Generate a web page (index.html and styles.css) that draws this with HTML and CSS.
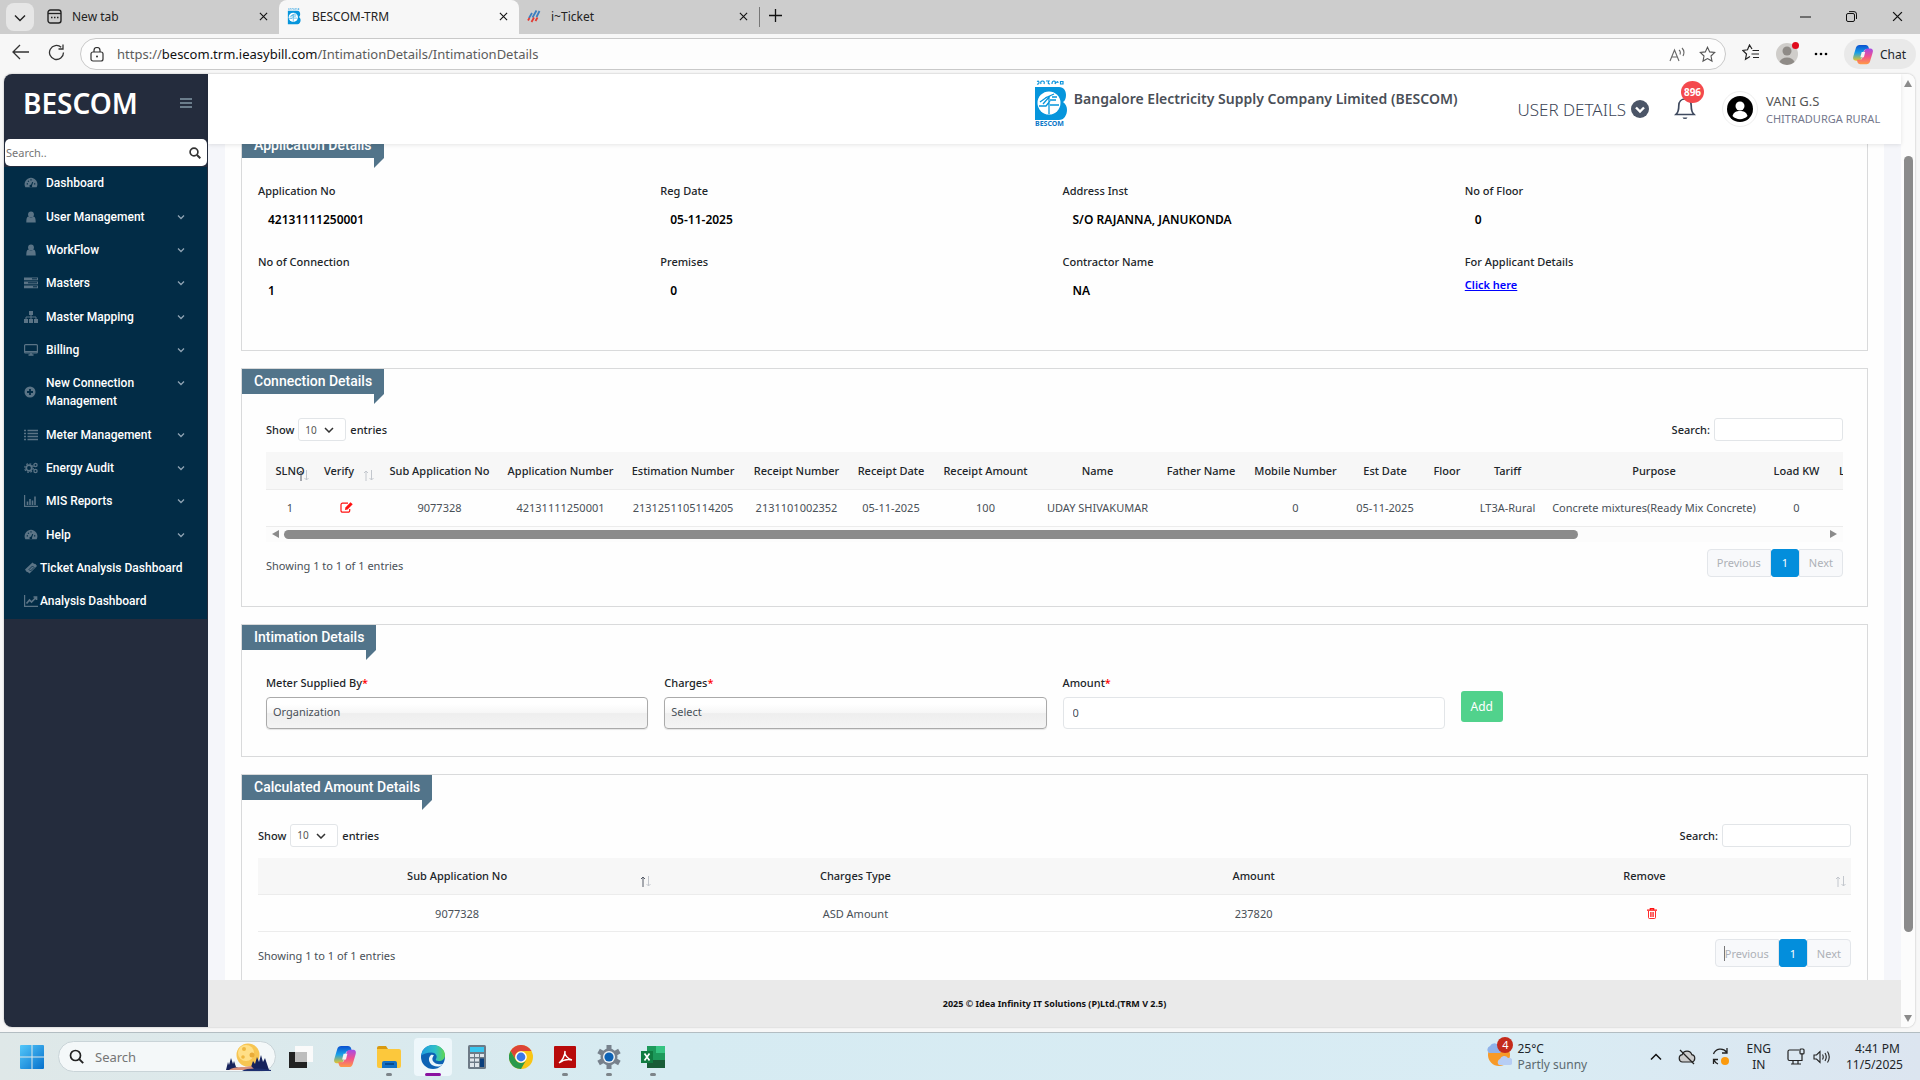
FILE: index.html
```html
<!DOCTYPE html>
<html lang="en">
<head>
  <meta charset="UTF-8" />
  <meta name="viewport" content="width=device-width, initial-scale=1.0"/>
  <title>BESCOM-TRM</title>
  <link rel="stylesheet" href="styles.css">
</head>
<body>
  <!-- shared icons -->
  <svg class="defs" aria-hidden="true">
    <linearGradient id="gBlue" x1="0" y1="0" x2="0" y2="1"><stop offset="0" stop-color="#0a4fd0"/><stop offset=".5" stop-color="#18a0e8"/><stop offset="1" stop-color="#e8c52a"/></linearGradient>
    <linearGradient id="gPink" x1="0" y1="0" x2="0" y2="1"><stop offset="0" stop-color="#a34be8"/><stop offset=".5" stop-color="#f0508e"/><stop offset="1" stop-color="#ff9a45"/></linearGradient>
    <linearGradient id="gWin" x1="0" y1="0" x2="1" y2="1"><stop offset="0" stop-color="#54c8fa"/><stop offset="1" stop-color="#0670cc"/></linearGradient>
    <linearGradient id="gEdge" x1="0" y1="0" x2="1" y2="0"><stop offset="0" stop-color="#1f9de0"/><stop offset=".6" stop-color="#2fc0c8"/><stop offset="1" stop-color="#5fd84f"/></linearGradient>
    <symbol id="copilot" viewBox="0 0 24 24">
      <path d="M8 1h7c2 0 3 1 3.500 3l.5 2h-3c-2 0-3 1-3.500 3l-2 7c-.6 2-2 3-4 3H4c-3 0-4-2-3-5l3-10c.7-2 2-3 4-3z" fill="url(#gBlue)"/>
      <path d="M16 23H9c-2 0-3-1-3.500-3L5 18h3c2 0 3-1 3.500-3l2-7c.6-2 2-3 4-3H20c3 0 4 2 3 5l-3 10c-.7 2-2 3-4 3z" fill="url(#gPink)"/>
      <path d="M10.500 9h4l-1.500 6H9z" fill="#f3f3f3"/>
    </symbol>
    <symbol id="bescom" viewBox="0 0 34 46">
      <path d="M2 1.500q2-1 2 1t-2 1.500M6 4q-1-3 1.500-3T9 4M11 1h3q-2 3 1 3M17 4q0-3 2-3t1 3q3-4 3-1M25.500 1.500h2.500v2.500h-2.500z" fill="none" stroke="#0b94dd" stroke-width="1.200"/>
      <path d="M0 7h24c5 0 7 4 7 8 0 3-1 6-3 7 3 2 4 5 4 8 0 5-3 10-8 10H0z" fill="#0695dc"/>
      <circle cx="14" cy="23" r="11.500" fill="#fff"/>
      <path d="M14 34V17M10 18l9-4M8 24l7-8M15 20h6M5 22l7-5M4 26h7l4-5M22 17h-5M15 25h9" fill="none" stroke="#0695dc" stroke-width="1.300"/>
    </symbol>
    <symbol id="gauge" viewBox="0 0 16 14">
      <path d="M8 1a7.500 7.500 0 0 0-6.600 11h13.200A7.500 7.500 0 0 0 8 1z" fill="currentColor"/>
      <path d="M8 11l2-5M3 8h1.500M11.500 8H13M4.500 4.500l1 1M8 2.500V4" stroke="#022c46" stroke-width="1.300"/>
      <circle cx="7.800" cy="10.500" r="1.600" fill="#022c46"/>
    </symbol>
    <symbol id="user" viewBox="0 0 14 14"><circle cx="7" cy="4" r="3.400" fill="currentColor"/><path d="M4 6.500C2 7 1.500 9 1.500 13.500h11C12.500 9 12 7 10 6.500 8 8 6 8 4 6.500z" fill="currentColor"/></symbol>
    <symbol id="caret" viewBox="0 0 8 6"><path d="M1 1.500l3 3 3-3" fill="none" stroke="#8fa3b3" stroke-width="1.300"/></symbol>
    <symbol id="x" viewBox="0 0 10 10"><path d="M1 1l8 8M9 1L1 9" stroke="#111" stroke-width="1.200"/></symbol>
  </svg>

  <!-- browser tabs -->
  <div class="tabstrip">
    <button class="tab-menu" aria-label="Tab actions"><svg width="12" height="8" viewBox="0 0 12 8"><path d="M1 1.500l5 5 5-5" fill="none" stroke="#222" stroke-width="1.400"/></svg></button>
    <div class="tab first">
      <svg width="15" height="15" viewBox="0 0 15 15"><rect x="1" y="1" width="13" height="13" rx="2.500" fill="none" stroke="#222" stroke-width="1.400"/><path d="M1 4.500h13" stroke="#222" stroke-width="1.300"/><path d="M4 8.500h1.500M7 8.500h1.500M10 8.500h1.500" stroke="#222" stroke-width="1.600"/></svg>
      <span>New tab</span>
      <button aria-label="Close tab"><svg width="9" height="9"><use href="#x"/></svg></button>
    </div>
    <div class="tab active">
      <svg width="15" height="17" viewBox="0 0 34 42"><use href="#bescom" width="34" height="46"/></svg>
      <span>BESCOM-TRM</span>
      <button aria-label="Close tab"><svg width="9" height="9"><use href="#x"/></svg></button>
    </div>
    <div class="tab">
      <svg width="14" height="14" viewBox="0 0 14 14"><path d="M2 9l3-5M5.500 8.500L9.500 1.500M9.500 8l3-6" stroke="#3c7fc0" stroke-width="1.800"/><path d="M1 11.500l1.500-2.500M4.500 13l2.500-4.500M8.500 12l2-3.500" stroke="#e23b34" stroke-width="1.800"/></svg>
      <span>i~Ticket</span>
      <button aria-label="Close tab"><svg width="9" height="9"><use href="#x"/></svg></button>
    </div>
    <button class="new-tab" aria-label="New tab"><svg width="15" height="15" viewBox="0 0 15 15"><path d="M7.500 1v13M1 7.500h13" stroke="#111" stroke-width="1.300"/></svg></button>
    <div class="window-buttons">
      <button aria-label="Minimize"><svg width="11" height="11"><path d="M0 6h11" stroke="#111"/></svg></button>
      <button aria-label="Restore"><svg width="11" height="11" viewBox="0 0 11 11"><rect x=".5" y="2.500" width="8" height="8" rx="1.500" fill="none" stroke="#111"/><path d="M3 .6h5a2.500 2.500 0 0 1 2.500 2.500V8" fill="none" stroke="#111"/></svg></button>
      <button aria-label="Close"><svg width="11" height="11"><use href="#x"/></svg></button>
    </div>
  </div>

  <!-- address bar -->
  <div class="toolbar">
    <button aria-label="Back"><svg width="17" height="16" viewBox="0 0 17 16"><path d="M8 1L1 8l7 7M1 8h16" fill="none" stroke="#333" stroke-width="1.300"/></svg></button>
    <button aria-label="Refresh"><svg width="17" height="17" viewBox="0 0 17 17"><path d="M15.500 8.500a7 7 0 1 1-2.300-5.200M15 .5v4.500h-4.500" fill="none" stroke="#333" stroke-width="1.300"/></svg></button>
    <div class="address">
      <svg width="14" height="15" viewBox="0 0 14 15"><rect x="1" y="5" width="12" height="9" rx="2" fill="none" stroke="#333" stroke-width="1.200"/><path d="M4 5V3.500a3 3 0 0 1 6 0V5" fill="none" stroke="#333" stroke-width="1.200"/><circle cx="7" cy="9.500" r="1" fill="#333"/></svg>
      <div class="url">https://<b>bescom.trm.ieasybill.com</b>/IntimationDetails/IntimationDetails</div>
      <svg width="17" height="15" viewBox="0 0 17 15"><path d="M1 14L5.500 3 10 14M2.500 10h6M10 3c1.500 1 1.500 3 1 4.500M13 1c2 2 2.500 5 1 8" fill="none" stroke="#666" stroke-width="1.100"/></svg>
      <svg width="17" height="17" viewBox="0 0 17 17"><path d="M8.500 1.200l2.200 4.700 5 .6-3.700 3.500 1 5.100-4.500-2.500L4 15.100l1-5.100L1.300 6.500l5-.6z" fill="none" stroke="#555" stroke-width="1.100"/></svg>
    </div>
    <button aria-label="Favorites"><svg width="18" height="17" viewBox="0 0 18 17"><path d="M10 5L7.500 1 5.500 5.800l-4.700.7L4.500 10l-1 5.200L8 12.500M10.500 6.500H17M9.500 10H17M11 13.500h6" fill="none" stroke="#222" stroke-width="1.200"/></svg></button>
    <div class="profile">
      <svg width="22" height="22" viewBox="0 0 22 22"><circle cx="11" cy="11" r="11" fill="#cfcdca"/><circle cx="11" cy="8" r="4.500" fill="#8f8b87"/><path d="M3.500 19a8 7 0 0 1 15 0 11 11 0 0 1-15 0z" fill="#8f8b87"/></svg>
    </div>
    <button class="more" aria-label="More"><svg width="14" height="4"><circle cx="2" cy="2" r="1.300"/><circle cx="7" cy="2" r="1.300"/><circle cx="12" cy="2" r="1.300"/></svg></button>
    <button class="chat"><svg width="22" height="21"><use href="#copilot"/></svg>Chat</button>
  </div>

  <!-- web page -->
  <div class="viewport">
    <aside class="sidebar">
      <div class="brand">
        <h1>BESCOM</h1>
        <button aria-label="Toggle menu"><svg width="12" height="10"><path d="M0 1h12M0 5h12M0 9h12" stroke="#8298a6" stroke-width="1.500"/></svg></button>
      </div>
      <div class="side-search">
        <input type="text" placeholder="Search.." aria-label="Search menu">
        <svg width="12" height="12" viewBox="0 0 12 12"><circle cx="5" cy="5" r="3.900" fill="none" stroke="#333" stroke-width="1.700"/><path d="M8 8l3.300 3.300" stroke="#333" stroke-width="2"/></svg>
      </div>
      <ul class="menu">
        <li><a href="#"><svg class="mi"><use href="#gauge"/></svg><span>Dashboard</span></a></li>
        <li><a href="#"><svg class="mi"><use href="#user"/></svg><span>User Management</span><svg class="caret"><use href="#caret"/></svg></a></li>
        <li><a href="#"><svg class="mi"><use href="#user"/></svg><span>WorkFlow</span><svg class="caret"><use href="#caret"/></svg></a></li>
        <li><a href="#"><svg class="mi" viewBox="0 0 14 12"><path d="M0 1.800h14M0 5.800h14M0 9.800h14" stroke="currentColor" stroke-width="2.800"/><path d="M8 1.800h5M4 5.800h9M9 9.800h4" stroke="#022c46"/></svg><span>Masters</span><svg class="caret"><use href="#caret"/></svg></a></li>
        <li><a href="#"><svg class="mi" viewBox="0 0 14 12"><path d="M5 0h4v4H5zM0 8h4v4H0zM5 8h4v4H5zM10 8h4v4h-4z" fill="currentColor"/><path d="M2 8V6h10v2M7 4v4" fill="none" stroke="currentColor"/></svg><span>Master Mapping</span><svg class="caret"><use href="#caret"/></svg></a></li>
        <li><a href="#"><svg class="mi" viewBox="0 0 14 12"><rect x=".6" y=".6" width="12.800" height="8.400" rx="1" fill="none" stroke="currentColor" stroke-width="1.200"/><path d="M1 7.800h12M4.500 11h5M7 9v2" stroke="currentColor" stroke-width="1.500"/></svg><span>Billing</span><svg class="caret"><use href="#caret"/></svg></a></li>
        <li class="two-line"><a href="#"><svg class="mi" viewBox="0 0 14 12"><circle cx="6" cy="6" r="5.500" fill="currentColor"/><path d="M6 3v6M3 6h6" stroke="#022c46" stroke-width="1.800"/></svg><span>New Connection Management</span><svg class="caret"><use href="#caret"/></svg></a></li>
        <li><a href="#"><svg class="mi" viewBox="0 0 14 12"><path d="M0 1.500h2M3.500 1.500H14M0 4.500h2M3.500 4.500H14M0 7.500h2M3.500 7.500H14M0 10.500h2M3.500 10.500H14" stroke="currentColor" stroke-width="1.600"/></svg><span>Meter Management</span><svg class="caret"><use href="#caret"/></svg></a></li>
        <li><a href="#"><svg class="mi" viewBox="0 0 14 12"><circle cx="5" cy="6" r="2.800" fill="none" stroke="currentColor" stroke-width="1.800"/><circle cx="5" cy="6" r="4.300" fill="none" stroke="currentColor" stroke-width="1.200" stroke-dasharray="1.800 1.580"/><circle cx="11.500" cy="3" r="1.600" fill="none" stroke="currentColor" stroke-width="1.300"/><circle cx="11.500" cy="9" r="1.600" fill="none" stroke="currentColor" stroke-width="1.300"/></svg><span>Energy Audit</span><svg class="caret"><use href="#caret"/></svg></a></li>
        <li><a href="#"><svg class="mi" viewBox="0 0 14 12"><path d="M.6 0v11.400H14" fill="none" stroke="currentColor" stroke-width="1.200"/><path d="M3.500 10V6.500M6 10V4M8.500 10V5.500M11 10V1.500" stroke="currentColor" stroke-width="1.600"/></svg><span>MIS Reports</span><svg class="caret"><use href="#caret"/></svg></a></li>
        <li><a href="#"><svg class="mi"><use href="#gauge"/></svg><span>Help</span><svg class="caret"><use href="#caret"/></svg></a></li>
        <li class="plain"><a href="#"><svg class="mi" viewBox="0 0 14 12"><path d="M1 7.500L8.500.5l1.500 1.300 1.500.2L13 4 5.500 11.500 4 10.200l-1.500-.4z" fill="currentColor"/><path d="M5 7.500l3.500-3.500 1.500 1.500L6.500 9z" fill="none" stroke="#022c46" stroke-width=".8"/></svg><span>Ticket Analysis Dashboard</span></a></li>
        <li class="plain"><a href="#"><svg class="mi" viewBox="0 0 14 12"><path d="M.6 0v11.400H14" fill="none" stroke="currentColor" stroke-width="1.200"/><path d="M2.500 8.500L5.500 5l2 2L12 2.500M9.500 2H12.500V5" fill="none" stroke="currentColor" stroke-width="1.700"/></svg><span>Analysis Dashboard</span></a></li>
      </ul>
    </aside>

    <div class="main">
      <header class="topbar">
        <svg class="logo" width="34" height="47" viewBox="0 0 34 47"><use href="#bescom" width="34" height="46"/><text x="0" y="46">BESCOM</text></svg>
        <div class="company">Bangalore Electricity Supply Company Limited (BESCOM)</div>
        <button class="user-details">USER DETAILS
          <svg width="18" height="18" viewBox="0 0 18 18"><circle cx="9" cy="9" r="9" fill="#4b5567"/><path d="M5 7.500l4 4 4-4" fill="none" stroke="#fff" stroke-width="2.400"/></svg>
        </button>
        <button class="bell" aria-label="Notifications">
          <svg width="22" height="24" viewBox="0 0 22 24"><path d="M2 18.500c2-1.800 2.800-4 2.800-9C4.800 5.500 7.500 3 11 3s6.200 2.500 6.200 6.500c0 5 .8 7.200 2.800 9zM11 1v2" fill="none" stroke="#3f4a5f" stroke-width="1.700"/><path d="M8.500 21.500a2.600 2.200 0 0 0 5 0z" fill="#3f4a5f"/></svg>
          <span class="badge">896</span>
        </button>
        <div class="avatar"><svg width="26" height="26" viewBox="0 0 26 26"><circle cx="13" cy="13" r="13"/><circle cx="13" cy="10" r="4.500" fill="#fff"/><path d="M5.500 20c1-4 4-5 7.500-5s6.500 1 7.500 5a10.500 10.500 0 0 1-15 0z" fill="#fff"/></svg></div>
        <div class="who">
          <div class="name">VANI G.S</div>
          <div class="office">CHITRADURGA RURAL</div>
        </div>
      </header>

      <div class="scroll-area">
        <div class="card">
          <section class="panel application">
            <h2 class="ribbon">Application Details</h2>
            <dl class="facts">
              <div><dt>Application No</dt><dd>42131111250001</dd></div>
              <div><dt>Reg Date</dt><dd>05-11-2025</dd></div>
              <div><dt>Address Inst</dt><dd>S/O RAJANNA, JANUKONDA</dd></div>
              <div><dt>No of Floor</dt><dd>0</dd></div>
              <div><dt>No of Connection</dt><dd>1</dd></div>
              <div><dt>Premises</dt><dd>0</dd></div>
              <div><dt>Contractor Name</dt><dd>NA</dd></div>
              <div><dt>For Applicant Details</dt><dd class="link"><a href="#">Click here</a></dd></div>
            </dl>
          </section>

          <section class="panel connection">
            <h2 class="ribbon">Connection Details</h2>
            <div class="table-tools">
              <label>Show <select><option>10</option></select> entries</label>
              <label>Search: <input type="text"></label>
            </div>
            <div class="table-scroll">
              <table class="wide">
                <colgroup><col class="c48"><col class="c64"><col class="c121"><col class="c121"><col class="c126"><col class="c103"><col class="c85"><col class="c103"><col class="c121"><col class="c85"><col class="c103"><col class="c76"><col class="c48"><col class="c73"><col class="c220"><col class="c64"><col></colgroup>
                <thead>
                  <tr>
                    <th class="sort asc">SLNO</th><th class="sort shift">Verify</th><th>Sub Application No</th><th>Application Number</th><th>Estimation Number</th><th>Receipt Number</th><th>Receipt Date</th><th>Receipt Amount</th><th>Name</th><th>Father Name</th><th>Mobile Number</th><th>Est Date</th><th>Floor</th><th>Tariff</th><th>Purpose</th><th>Load KW</th><th class="cut">Load HP</th>
                  </tr>
                </thead>
                <tbody>
                  <tr>
                    <td>1</td>
                    <td><svg class="edit" width="13" height="11" viewBox="0 0 13 11"><path d="M8 1.200H2.500A1.500 1.500 0 0 0 1 2.700v6a1.500 1.500 0 0 0 1.500 1.500H8.200a1.500 1.500 0 0 0 1.500-1.500V7" fill="none" stroke="#f11" stroke-width="1.200"/><path d="M5 8l.4-2.600L10.500.2l2.200 2L7.600 7.500z" fill="#f11"/></svg></td>
                    <td>9077328</td><td>42131111250001</td><td>2131251105114205</td><td>2131101002352</td><td>05-11-2025</td><td>100</td><td>UDAY SHIVAKUMAR</td><td></td><td>0</td><td>05-11-2025</td><td></td><td>LT3A-Rural</td><td>Concrete mixtures(Ready Mix Concrete)</td><td>0</td><td></td>
                  </tr>
                </tbody>
              </table>
            </div>
            <div class="hbar"><i class="arrow left"></i><div class="track"><div class="thumb"></div></div><i class="arrow right"></i></div>
            <div class="table-foot">
              <div>Showing 1 to 1 of 1 entries</div>
              <div class="pager"><button disabled>Previous</button><button class="current">1</button><button disabled>Next</button></div>
            </div>
          </section>

          <section class="panel intimation">
            <h2 class="ribbon">Intimation Details</h2>
            <form class="fields">
              <div class="field">
                <label for="supplied">Meter Supplied By<em>*</em></label>
                <select id="supplied"><option>Organization</option></select>
              </div>
              <div class="field">
                <label for="charges">Charges<em>*</em></label>
                <select id="charges"><option>Select</option></select>
              </div>
              <div class="field">
                <label for="amount">Amount<em>*</em></label>
                <input type="text" id="amount" value="0">
              </div>
              <button type="button" class="add">Add</button>
            </form>
          </section>

          <section class="panel calculated">
            <h2 class="ribbon">Calculated Amount Details</h2>
            <div class="table-tools">
              <label>Show <select><option>10</option></select> entries</label>
              <label>Search: <input type="text"></label>
            </div>
            <table>
              <thead>
                <tr><th class="sort asc">Sub Application No</th><th>Charges Type</th><th>Amount</th><th class="sort shift">Remove</th></tr>
              </thead>
              <tbody>
                <tr>
                  <td>9077328</td><td>ASD Amount</td><td>237820</td>
                  <td><svg width="10" height="11" viewBox="0 0 10 11"><path d="M0 2.200h10M3.300 2V.7h3.400V2" fill="none" stroke="#f11" stroke-width="1.200"/><path d="M1.500 3v6.500q0 1 1 1h5q1 0 1-1V3M3.700 4v5M5 4v5M6.300 4v5" fill="none" stroke="#f11" stroke-width=".9"/></svg></td>
                </tr>
              </tbody>
            </table>
            <div class="table-foot">
              <div>Showing 1 to 1 of 1 entries</div>
              <div class="pager"><button disabled class="has-cursor">Previous</button><button class="current">1</button><button disabled>Next</button></div>
            </div>
          </section>
        </div>
      </div>

      <footer class="page-footer">2025 © Idea Infinity IT Solutions (P)Ltd.(TRM V 2.5)</footer>
    </div>

    <div class="vbar"><i class="arrow up"></i><div class="track"><div class="thumb"></div></div><i class="arrow down"></i></div>
  </div>

  <!-- windows taskbar -->
  <div class="taskbar">
    <button class="start" aria-label="Start"><svg width="24" height="24" viewBox="0 0 24 24"><path d="M0 1q0-1 1-1h10.500v11.500H0zM12.500 0H23q1 0 1 1v10.500H12.500zM0 12.500h11.500V24H1q-1 0-1-1zM12.500 12.500H24V23q0 1-1 1H12.500z" fill="url(#gWin)"/></svg></button>
    <div class="task-search">
      <svg width="15" height="15" viewBox="0 0 15 15"><circle cx="6.500" cy="6.500" r="5" fill="none" stroke="#222" stroke-width="1.700"/><path d="M10.200 10.200l4 4" stroke="#222" stroke-width="1.900"/></svg>
      <input type="text" placeholder="Search" aria-label="Taskbar search">
      <svg width="45" height="28" viewBox="0 0 45 28"><circle cx="22" cy="12" r="11.500" fill="#f7c552"/><circle cx="20" cy="10" r="8" fill="#ffdf87"/><circle cx="18" cy="6" r="2" fill="#efb740"/><circle cx="26" cy="12" r="2.500" fill="#e9ab37"/><circle cx="17" cy="14" r="1.800" fill="#efb740"/><path d="M0 27l2-8 1 3 2-7 2 6 1-3 2 6 3 1 12-1 2-6 2 3 2-7 2 5 2-7 2 7 2-4 2 6 2 6z" fill="#16235c"/><path d="M3 27c5-4 13-2 22-4l4 4z" fill="#d98f7a"/><path d="M16 28c5-3 16-3 29-1v1z" fill="#1d2f70"/></svg>
    </div>
    <div class="apps">
      <button aria-label="Task view"><svg width="24" height="24" viewBox="0 0 24 24"><rect x="0" y="7" width="18" height="16" fill="#222"/><rect x="6" y="1" width="18" height="16" fill="#fafafa"/><path d="M6 7h12v10H6z" fill="#bdbdbd"/></svg></button>
      <button aria-label="Copilot"><svg width="24" height="23"><use href="#copilot"/></svg></button>
      <button class="open" aria-label="File Explorer"><svg width="26" height="24" viewBox="0 0 26 24"><path d="M1 3q0-2 2-2h7l2 3H1z" fill="#d99a10"/><path d="M1 4h22q2 0 2 2v15q0 2-2 2H3q-2 0-2-2z" fill="#fcc83c"/><path d="M6 23v-5q0-2 2-2h11q2 0 2 2v5z" fill="#1370c4"/><path d="M9 19h9" stroke="#084b90" stroke-width="2"/></svg></button>
      <button class="open focused" aria-label="Edge"><svg width="24" height="24" viewBox="0 0 24 24"><circle cx="12" cy="12" r="12" fill="#0d62b4"/><path d="M.3 10.500C1 4 6 0 12 0c7 0 12 5 12 10 0 4-3 6-6 6-2 0-4-.7-3-2 2-3-.5-6.500-4.500-6.500C6 7.500 2 9 .3 10.500z" fill="url(#gEdge)"/><path d="M10 10c-3 2-3 8 2 10.500 4 2 8 1 10.500-1.500-5 1-10-.5-11-4-.5-2 .5-3.500 1.500-4.500-1-.8-2-.9-3-.5z" fill="#e9f6fb"/></svg></button>
      <button aria-label="Calculator"><svg width="18" height="24" viewBox="0 0 18 24"><rect width="18" height="24" rx="1.500" fill="#6d7a86"/><path d="M2 2h14v5H2z" fill="#39c6ef"/><path d="M2 9h4v3H2zM7 9h4v3H7zM12 9h4v3h-4zM2 13.500h4v3H2zM7 13.500h4v3H7zM2 18h4v4H2zM7 18h4v4H7z" fill="#dfe5ea"/><path d="M12 13.500h4V22h-4z" fill="#0a3f7c"/></svg></button>
      <button aria-label="Chrome"><svg width="24" height="24" viewBox="0 0 24 24"><circle cx="12" cy="12" r="12" fill="#f9c515"/><path d="M1.600 6A12 12 0 0 1 22.400 6H12a6 6 0 0 0-5.200 9z" fill="#dc4437"/><path d="M1.600 6A12 12 0 0 0 12 24l5.200-9a6 6 0 0 1-10.400 0z" fill="#2a9a4c"/><circle cx="12" cy="12" r="5.800" fill="#fff"/><circle cx="12" cy="12" r="4.400" fill="#3b78e7"/></svg></button>
      <button class="open" aria-label="Acrobat"><svg width="22" height="22" viewBox="0 0 22 22"><rect width="22" height="22" rx="1" fill="#b80a0a"/><path d="M5 17c3-2 6-7 6-12M11 5c-1 4 3 8 7 9-4-1-9 0-13 3" fill="none" stroke="#fff" stroke-width="1.400"/></svg></button>
      <button class="open" aria-label="Settings"><svg width="24" height="24" viewBox="0 0 24 24"><circle cx="12" cy="12" r="8.500" fill="#77818c"/><path d="M12 0v24M1.600 6l20.800 12M1.600 18L22.400 6" stroke="#77818c" stroke-width="5"/><circle cx="12" cy="12" r="6" fill="#eef3f6"/><circle cx="12" cy="12" r="4.600" fill="#0d62b4"/></svg></button>
      <button class="open" aria-label="Excel"><svg width="24" height="22" viewBox="0 0 24 22"><path d="M6 0h18v22H6z" fill="#1d9a5b"/><path d="M15 0h9v7h-9z" fill="#35c481"/><path d="M6 14h18v8H6z" fill="#185c37"/><path d="M0 5h12v12H0z" fill="#107c41"/><path d="M3.500 7.500l5 7M8.500 7.500l-5 7" stroke="#fff" stroke-width="1.700"/></svg></button>
    </div>
    <div class="weather">
      <div class="weather-icon">
        <svg width="26" height="26" viewBox="0 0 26 26"><circle cx="13" cy="14" r="11" fill="#f79a28"/><path d="M3 12a4 4 0 0 1 1-7 5 5 0 0 1 9 0 4 4 0 0 1 1 7z" fill="#8fb2ea"/><path d="M13 24a3.500 3.500 0 0 1 1-6 4.500 4.500 0 0 1 8-1 3.500 3.500 0 0 1 2 7z" fill="#b6cdf4"/></svg>
        <span>4</span>
      </div>
      <div><div>25°C</div><div class="muted">Partly sunny</div></div>
    </div>
    <div class="tray">
      <svg width="12" height="8" viewBox="0 0 12 8"><path d="M1 6.500l5-5 5 5" fill="none" stroke="#111" stroke-width="1.500"/></svg>
      <svg width="18" height="16" viewBox="0 0 18 16"><path d="M4.500 13a3.700 3.700 0 0 1-.3-7.300 5 5 0 0 1 9.600 0A3.700 3.700 0 0 1 13.500 13z" fill="#ccc" stroke="#222" stroke-width="1.200"/><path d="M2 1l14 14" stroke="#222" stroke-width="1.300"/></svg>
      <svg width="18" height="18" viewBox="0 0 18 18"><path d="M1.500 6a7.500 7.500 0 0 1 13-2M15 0v5h-5M6 16a7 7 0 0 1-4-4M1.500 16v-4.500H6" fill="none" stroke="#222" stroke-width="1.300"/><circle cx="13" cy="13" r="4" fill="#fb9a0e"/></svg>
      <div class="lang">ENG<br>IN</div>
      <svg width="18" height="17" viewBox="0 0 18 17"><path d="M12 2H2.500Q1 2 1 3.500V11q0 1.500 1.500 1.500H15V8M4 16h10M6 12.500V16M11 12.500V16M15 8V5" fill="none" stroke="#222" stroke-width="1.200"/><rect x="13" y="1" width="4" height="5" rx="1" fill="none" stroke="#222" stroke-width="1.200"/></svg>
      <svg class="speaker" width="17" height="14" viewBox="0 0 17 14"><path d="M1 5h2.500L7 1.500v11L3.500 9H1zM9.500 4.500q1.500 2.500 0 5M12 3q2.500 4 0 8M14.500 1.500q3.500 5.500 0 11" fill="none" stroke="#222" stroke-width="1.100"/></svg>
      <div class="clock">4:41 PM<br>11/5/2025</div>
    </div>
  </div>
</body>
</html>
```
FILE: styles.css
```css
* {
  box-sizing: border-box;
}

body {
  margin: 0;
  height: 100vh;
  display: flex;
  flex-direction: column;
  overflow: hidden;
  background: #f7f7f7;
  font-family: "Noto Sans", "Open Sans", sans-serif;
  font-size: 12px;
  color: #212529;
}

button, input, select {
  font-family: inherit;
  font-size: inherit;
  color: inherit;
}

button {
  border: none;
  background: none;
  padding: 0;
  cursor: pointer;
}

button, svg {
  flex-shrink: 0;
}

.defs {
  position: absolute;
  width: 0;
  height: 0;
}

/* ---- browser tabs ---- */
.tabstrip {
  display: flex;
  align-items: center;
  height: 34px;
  flex-shrink: 0;
  background: #cdcdcd;
}

.tab-menu {
  width: 28px;
  height: 28px;
  margin: 0 5px 0 6px;
  border-radius: 8px;
  background: #e6e6e6;
}

.tab {
  display: flex;
  align-items: center;
  gap: 10px;
  width: 240px;
  height: 34px;
  padding: 0 11px 2px 8px;
  color: #222;
}

.tab span {
  flex: 1;
}

.tab.active {
  background: #f7f7f7;
  border-radius: 8px 8px 0 0;
}

.new-tab {
  height: 20px;
  padding: 0 8px;
  border-left: 1px solid #777;
}

.window-buttons {
  display: flex;
  margin-left: auto;
}

.window-buttons button {
  width: 46px;
  height: 34px;
}

/* ---- address bar ---- */
.toolbar {
  display: flex;
  align-items: center;
  gap: 16px;
  height: 40px;
  flex-shrink: 0;
  padding: 0 4px 0 12px;
}

.toolbar > button:nth-child(2) {
  margin: 0 3px;
}

.address {
  display: flex;
  align-items: center;
  gap: 13px;
  flex: 1;
  height: 32px;
  padding: 0 9px;
  margin-left: -4px;
  border: 1px solid #c9c9c9;
  border-radius: 16px;
  background: #fdfdfd;
}

.url {
  flex: 1;
  font-size: 13px;
  color: #5c5c5c;
}

.url b {
  font-weight: 400;
  color: #111;
}

.profile {
  position: relative;
  height: 22px;
}

.profile::after {
  content: "";
  position: absolute;
  top: -1px;
  right: -1px;
  width: 7px;
  height: 7px;
  border-radius: 50%;
  background: #e00b1c;
}

.more {
  display: flex;
}

.chat {
  display: flex;
  align-items: center;
  gap: 6px;
  height: 30px;
  padding: 0 10px 0 8px;
  border-radius: 15px;
  background: #e9e9e9;
}

/* ---- viewport ---- */
.viewport {
  flex: 1;
  min-height: 0;
  display: flex;
  margin: 0 5px 5px 4px;
  border-radius: 8px;
  overflow: hidden;
  background: #fff;
  box-shadow: 0 0 2px #aaa;
}

.sidebar {
  width: 204px;
  flex-shrink: 0;
  background: #242c3d;
}

.brand {
  display: flex;
  align-items: center;
  justify-content: space-between;
  height: 65px;
  padding: 0 16px 7px 19px;
}

.brand h1 {
  margin: 0;
  font-size: 28px;
  font-weight: 600;
  color: #fff;
}

.side-search {
  display: flex;
  align-items: center;
  height: 27px;
  margin: 0 1px;
  padding: 0 6px 0 1px;
  border-radius: 5px;
  background: #fff;
}

.side-search input {
  flex: 1;
  min-width: 0;
  padding: 0;
  border: none;
  outline: none;
  font-size: 11px;
}

.menu {
  list-style: none;
  margin: 1px 1px 0 0;
  padding: 0;
  background: #022c46;
  font-family: Roboto, sans-serif;
  font-weight: 500;
  font-size: 12px;
  line-height: 18px;
}

.menu li:nth-child(3n+1) {
  padding-bottom: 1px;
}

.menu a {
  display: flex;
  align-items: center;
  padding: 7px 22px 8px 20px;
  color: #fff;
  text-decoration: none;
}

.menu span {
  flex: 1;
}

.mi {
  width: 14px;
  height: 12px;
  margin-right: 8px;
  color: #5b7486;
}

.caret {
  width: 8px;
  height: 6px;
}

.two-line .caret {
  align-self: flex-start;
  margin-top: 6px;
}

.plain .mi {
  margin-right: 2px;
}

.plain a {
  padding-right: 0;
}

/* ---- page header ---- */
.main {
  flex: 1;
  min-width: 0;
  display: flex;
  flex-direction: column;
}

.topbar {
  display: flex;
  align-items: flex-start;
  justify-content: flex-end;
  height: 70px;
  flex-shrink: 0;
  padding: 6px 14px 0 0;
  position: relative;
  z-index: 1;
  background: #fff;
  box-shadow: 0 1px 4px rgba(0,0,0,0.1);
}

.logo text {
  font-size: 7px;
  font-weight: 700;
  fill: #0b78c8;
}

.company {
  margin: 9px 60px 0 5px;
  font-size: 14px;
  font-weight: 600;
  color: #4a4f57;
}

.user-details {
  display: flex;
  align-items: center;
  gap: 5px;
  height: 24px;
  margin: 17px 25px 0 0;
  font-size: 17px;
  font-weight: 300;
  color: #3d4657;
}

.bell {
  position: relative;
  margin: 16px 26px 0 0;
}

.badge {
  position: absolute;
  top: -15px;
  left: 7px;
  width: 23px;
  height: 22px;
  border-radius: 50%;
  background: #f4494d;
  color: #fff;
  font-size: 10px;
  font-weight: 700;
  line-height: 22px;
}

.avatar {
  display: flex;
  align-items: center;
  justify-content: center;
  width: 36px;
  height: 36px;
  margin: 11px 8px 0 0;
  border: 1px solid #eee;
  border-radius: 50%;
}

.who {
  margin-top: 12px;
  width: 121px;
  white-space: nowrap;
  line-height: 18px;
}

.name {
  font-size: 13px;
  color: #555;
}

.office {
  font-size: 11px;
  color: #74788d;
}

/* ---- content ---- */
.scroll-area {
  flex: 1;
  min-height: 0;
  overflow: hidden;
  padding: 0 17px;
  background: #f5f6fa;
}

.card {
  margin-top: -12px;
  padding: 0 16px;
  background: #fefefe;
}

.panel {
  margin-bottom: 17px;
  border: 1px solid #d9dadb;
}

.ribbon {
  position: relative;
  width: max-content;
  height: 25px;
  margin: 0;
  padding: 0 12px;
  background: #52748a;
  color: #fff;
  font: 500 14px/24px Roboto, sans-serif;
}

.ribbon::after {
  content: "";
  position: absolute;
  top: 100%;
  right: 0;
  border-top: 10px solid #52748a;
  border-right: 10px solid transparent;
}

.facts {
  display: grid;
  grid-template-columns: repeat(4, 1fr);
  margin: 0;
  padding: 24px 0 26px 16px;
}

.facts > div {
  height: 71px;
  line-height: 18px;
}

.facts dt {
  font-size: 11px;
  font-weight: 500;
}

.facts dd {
  margin: 11px 0 0 10px;
  font-size: 12px;
  font-weight: 600;
  color: #000;
}

.facts dd.link {
  margin: 5px 0 0;
  font-size: 11px;
}

.facts a {
  color: #00f;
}

.connection {
  padding-bottom: 23px;
}

.connection .table-tools,
.connection .table-scroll,
.connection .hbar,
.connection .table-foot {
  margin-left: 24px;
  margin-right: 24px;
}

.calculated {
  padding: 0 16px 24px;
}

.calculated .ribbon {
  margin-left: -16px;
}

.table-tools {
  display: flex;
  justify-content: space-between;
  padding: 24px 0 11px;
}

.table-tools label {
  display: flex;
  align-items: center;
  gap: 4px;
  font-size: 11px;
  font-weight: 500;
}

.table-tools select,
.table-tools input {
  height: 23px;
  border: 1px solid #e2e5e8;
  border-radius: 3px;
  background: #fff;
  font-size: 10px;
}

.table-tools select {
  width: 48px;
  padding: 0 6px;
  appearance: none;
  color: #555;
  background: #fff url("data:image/svg+xml,%3Csvg xmlns='http://www.w3.org/2000/svg' width='10' height='6'%3E%3Cpath d='M1 1l4 4 4-4' fill='none' stroke='%23333' stroke-width='1.500'/%3E%3C/svg%3E") no-repeat 25px 8px;
}

.table-tools input {
  width: 129px;
}

.table-scroll {
  overflow: hidden;
}

table {
  width: 100%;
  table-layout: fixed;
  border-collapse: collapse;
  font-size: 11px;
  text-align: center;
}

table.wide {
  width: 1869px;
}

th, td {
  height: 37px;
  padding: 0;
  border-bottom: 1px solid #ececec;
  white-space: nowrap;
}

th {
  position: relative;
  background: #f7f7f7;
  font-weight: 500;
}

td {
  color: #495057;
}

td svg {
  display: block;
  margin: 0 auto;
}

/* sort arrows */
.sort::after {
  content: "";
  position: absolute;
  right: 5px;
  top: 18px;
  width: 11px;
  height: 11px;
  background: url("data:image/svg+xml,%3Csvg xmlns='http://www.w3.org/2000/svg' width='11' height='11' fill='none' stroke='%23c3c7cd'%3E%3Cpath d='M3 11V1M1 3l2-2 2 2M8.500 0v10M6.500 8l2 2 2-2'/%3E%3C/svg%3E");
}

.sort.asc::after {
  background: url("data:image/svg+xml,%3Csvg xmlns='http://www.w3.org/2000/svg' width='11' height='11' fill='none'%3E%3Cpath d='M3 11V1M1 3l2-2 2 2' stroke='%23555b66'/%3E%3Cpath d='M8.500 0v10M6.500 8l2 2 2-2' stroke='%23c3c7cd'/%3E%3C/svg%3E");
}

.shift {
  padding-right: 15px;
}

.cut {
  padding-left: 10px;
  text-align: left;
}

.c48 { width: 48px; }
.c64 { width: 65px; }
.c73 { width: 73px; }
.c76 { width: 76px; }
.c85 { width: 86px; }
.c103 { width: 103px; }
.c121 { width: 121px; }
.c126 { width: 124px; }
.c220 { width: 220px; }

/* scroll bars */
.hbar {
  display: flex;
  align-items: center;
  gap: 5px;
  height: 15px;
  padding: 0 6px;
  background: #fcfcfc;
}

.track {
  flex: 1;
}

.hbar .thumb {
  width: 84%;
  height: 9px;
  border-radius: 5px;
  background: #8b8b8b;
}

.vbar {
  display: flex;
  flex-direction: column;
  align-items: center;
  gap: 6px;
  width: 14px;
  padding: 6px 0 5px;
  flex-shrink: 0;
  background: #fcfcfc;
}

.vbar .track {
  padding-top: 63px;
}

.vbar .thumb {
  width: 9px;
  height: 91%;
  border-radius: 5px;
  background: #8b8b8b;
}

.arrow {
  border: 4px solid transparent;
}

.left { border-right: 7px solid #8b8b8b; border-left: 0; }
.right { border-left: 7px solid #8b8b8b; border-right: 0; }
.up { border-bottom: 7px solid #8b8b8b; border-top: 0; }
.down { border-top: 7px solid #8b8b8b; border-bottom: 0; }

.table-foot {
  display: flex;
  justify-content: space-between;
  padding-top: 7px;
  font-size: 11px;
  line-height: 34px;
  color: #495057;
}

.pager {
  display: flex;
  height: 28px;
}

.pager button {
  position: relative;
  padding: 0 9px;
  border: 1px solid #e3e6ea;
  background: #f8f9fb;
  color: #adb1b7;
}

.pager button:first-child { border-radius: 4px 0 0 4px; }
.pager button:last-child { border-radius: 0 4px 4px 0; }

.pager .current {
  width: 28px;
  border-color: #038edc;
  border-radius: 3px;
  background: #038edc;
  color: #fff;
}

.has-cursor::before {
  content: "";
  position: absolute;
  left: 8px;
  top: 6px;
  height: 15px;
  border-left: 1px solid #777;
}

/* form */
.fields {
  display: grid;
  grid-template-columns: repeat(4, 1fr);
  gap: 16px;
  padding: 24px 24px 27px;
}

.field label {
  display: block;
  margin: 0 0 5px;
  font-size: 11px;
  font-weight: 500;
  line-height: 18px;
}

.field em {
  color: #f00;
  font-style: normal;
}

.field select,
.field input {
  display: block;
  width: 100%;
  height: 32px;
  border-radius: 4px;
  font-size: 11px;
  color: #495057;
}

.field select {
  appearance: none;
  padding: 0 6px 2px;
  border: 1px solid #aaa;
  background: linear-gradient(#fff 20%, #f6f6f6 50%, #eee 52%, #f4f4f4 100%);
  box-shadow: 0 1px 1px rgba(0,0,0,0.1);
}

.field input {
  padding: 0 9px;
  border: 1px solid #e2e5e8;
  background: #fff;
}

.add {
  justify-self: start;
  width: 42px;
  height: 31px;
  margin-top: 17px;
  border-radius: 3px;
  background: #51d28c;
  color: #fff;
  font-size: 12px;
}

.page-footer {
  height: 47px;
  flex-shrink: 0;
  background: #eaeaea;
  text-align: center;
  font-size: 9px;
  font-weight: 700;
  line-height: 47px;
  color: #111;
}

/* ---- taskbar ---- */
.taskbar {
  display: flex;
  align-items: center;
  height: 48px;
  flex-shrink: 0;
  padding: 0 20px;
  border-top: 1px solid #b3bdc2;
  background: linear-gradient(90deg, #dfe8e8, #d6ebf2 35%, #d9ecf4 80%, #dce5f0);
  font-size: 12px;
  line-height: 16px;
}

.start {
  height: 24px;
  margin-right: 14px;
}

.task-search {
  display: flex;
  align-items: center;
  gap: 11px;
  width: 218px;
  height: 31px;
  margin-right: 3px;
  padding: 0 4px 0 10px;
  border: 1px solid #c9d4d8;
  border-radius: 16px;
  background: #f4f8f9;
}

.task-search input {
  flex: 1;
  min-width: 0;
  padding: 0;
  border: none;
  outline: none;
  background: none;
  font-size: 13px;
}

.apps {
  display: flex;
  gap: 6px;
  padding-left: 3px;
}

.apps button {
  position: relative;
  display: flex;
  align-items: center;
  justify-content: center;
  width: 38px;
  height: 38px;
  border-radius: 4px;
}

.apps .focused {
  background: #eef7fb;
}

.open::after {
  content: "";
  position: absolute;
  bottom: 0;
  left: 16px;
  width: 6px;
  height: 3px;
  border-radius: 2px;
  background: #7d8489;
}

.focused::after {
  left: 11px;
  width: 16px;
  background: #8a12a0;
}

.weather {
  display: flex;
  gap: 4px;
  width: 164px;
  margin-left: auto;
}

.weather-icon {
  position: relative;
  width: 27px;
}

.weather-icon span {
  position: absolute;
  top: -4px;
  right: 0;
  width: 16px;
  height: 16px;
  border-radius: 50%;
  background: #c42b1c;
  color: #fff;
  text-align: center;
  font-size: 11px;
}

.muted {
  color: #5c6a70;
}

.tray {
  display: flex;
  align-items: center;
  gap: 16px;
}

.lang {
  text-align: center;
}

.speaker {
  margin-left: -8px;
}

.clock {
  width: 54px;
  text-align: right;
}
```
